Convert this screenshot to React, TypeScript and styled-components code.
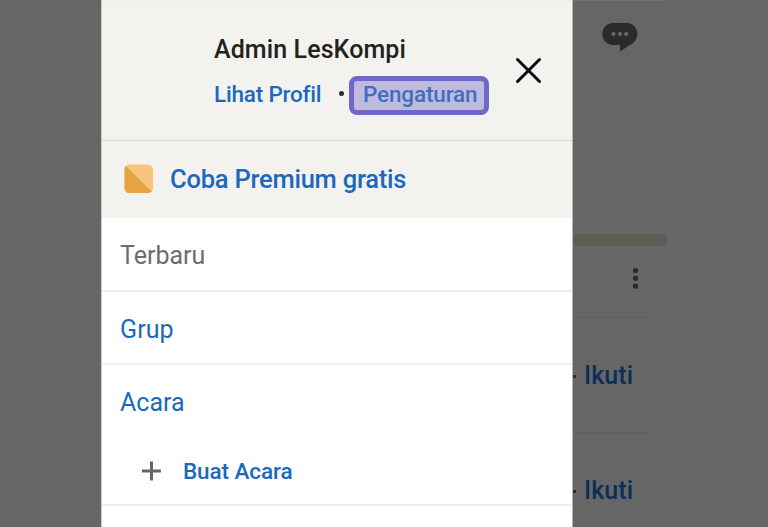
import React from 'react';
import styled, { createGlobalStyle } from 'styled-components';

const GlobalStyle = createGlobalStyle`
  * { box-sizing: border-box; }
  body { margin: 0; background: #666666; overflow: hidden; }
  button { appearance: none; background: none; border: 0; padding: 0; margin: 0; font: inherit; }
  svg { display: block; }
`;

const Screen = styled.div`
  display: grid;
  grid-template-columns: 101px 472px 1fr;
  width: 768px;
  height: 527px;
  overflow: hidden;
  background: #666666;
  font-family: Roboto, sans-serif;
`;

const Scrim = styled.div`
  border-bottom: 1px solid #606060;
`;

const Drawer = styled.aside`
  display: flex;
  flex-direction: column;
  background: #ffffff;
  box-shadow: inset 1px 0 0 #c9c9c7, inset -1px 0 0 #b8b8b6;
  padding: 0 1px;
`;

const Header = styled.header`
  display: flex;
  flex: none;
  height: 141px;
  padding-left: 112px;
  background: #f3f2ee;
  border-top: 1px solid #eeede9;
  border-bottom: 1px solid #d9dad6;
`;

const Identity = styled.div`
  flex: none;
  width: 300px;
  padding-top: 33px;
`;

const Label = styled.span<{ $size: number; $color?: string; $weight?: number; $track?: number }>`
  display: block;
  white-space: nowrap;
  font-size: ${(p) => p.$size}px;
  line-height: 32px;
  font-weight: ${(p) => p.$weight ?? 500};
  letter-spacing: ${(p) => p.$track ?? 0}px;
  color: ${(p) => p.$color ?? '#1b69bd'};
`;

const ProfileLinks = styled.div`
  display: flex;
  align-items: center;
  margin-top: 10px;
  height: 39px;
`;

const ProfileLink = styled.div`
  width: 125px;
  padding-bottom: 3px;
`;

const Separator = styled.i`
  width: 5px;
  height: 5px;
  margin: 0 5px 4px 0;
  border-radius: 50%;
  background: #2b2b29;
`;

const Highlight = styled.button`
  display: flex;
  align-items: center;
  width: 140px;
  height: 39px;
  padding: 0 0 3px 9px;
  border: 5px solid #7068c5;
  border-radius: 8px;
  background: #bfbae0;
`;

const CloseButton = styled.button`
  align-self: flex-start;
  margin: 56px 0 0;
`;

const PremiumRow = styled.div`
  display: flex;
  flex: none;
  align-items: center;
  height: 77px;
  padding: 0 0 1px 22px;
  gap: 16px;
  background: #f3f2ee;
`;

const Section = styled.section<{ $height: number }>`
  flex: none;
  height: ${(p) => p.$height}px;
  padding: 22px 0 0 18px;
  border-bottom: 2px solid #efefee;
`;

const SubItem = styled.div`
  display: flex;
  align-items: center;
  gap: 22px;
  margin-top: 36px;
  padding-left: 21px;
`;

const Page = styled.main`
  display: flex;
  flex-direction: column;
  border-bottom: 1px solid #606060;
`;

const Toolbar = styled.div`
  width: 94px;
  height: 234px;
  padding: 22px 0 0 29px;
  border-top: 1px solid #727272;
`;

const Band = styled.div`
  width: 94px;
  height: 12px;
  background: #5e5d56;
`;

const FeedHead = styled.div`
  width: 75px;
  height: 72px;
  padding: 20px 0 0 58px;
  border-bottom: 1px solid #606060;
`;

const FollowRow = styled.div`
  display: flex;
  align-items: center;
  width: 75px;
  height: 115px;
  padding-top: 2px;
  border-bottom: 1px solid #606060;
`;

const PlusEnd = styled.i`
  width: 3px;
  height: 3px;
  margin-right: 8px;
  background: #0c2f59;
`;

const CloseIcon = () => (
  <svg width="28" height="28" viewBox="0 0 28 28" fill="none" stroke="#0a0a0a" strokeWidth="3" strokeLinecap="round">
    <path d="M3.500 2.500 25.500 24.500M25.500 2.500 3.500 24.500" />
  </svg>
);

const PremiumIcon = () => (
  <svg width="30" height="30" viewBox="0 0 30 30">
    <rect x="0.5" y="0.5" width="28.5" height="28.5" rx="5" fill="#f7c67c" />
    <path d="M1.9 1.9 27.5 27.5Q26 29 24 29H5.5Q.5 29 .5 24V5.500Q.5 3.200 1.900 1.900Z" fill="#e7a340" />
  </svg>
);

const PlusIcon = () => (
  <svg width="20" height="20" viewBox="0 0 20 20" stroke="#666666" strokeWidth="3">
    <path d="M10.500 .5v19M.9 10h19" />
  </svg>
);

const ChatIcon = () => (
  <svg width="36" height="30" viewBox="0 0 36 30">
    <path
      d="M11.500 0H24.500C30.500 0 35.300 4.700 35.300 11C35.300 15 33.500 18.200 30.200 20.600L18 28.500V22H11.500C5 22 .3 17.500 .3 11S5 0 11.500 0Z"
      fill="#2a2a27"
    />
    <g fill="#6a6a69">
      <circle cx="11.500" cy="11" r="2.100" />
      <circle cx="17.900" cy="11" r="2.100" />
      <circle cx="24.200" cy="11" r="2.100" />
    </g>
  </svg>
);

const MoreIcon = () => (
  <svg width="8" height="24" viewBox="0 0 8 24" fill="#2a2a27">
    <circle cx="4.500" cy="4.500" r="2.600" />
    <circle cx="4.500" cy="12.300" r="2.600" />
    <circle cx="4.500" cy="20.200" r="2.600" />
  </svg>
);

const Follow = () => (
  <FollowRow>
    <PlusEnd />
    <Label $size={25} $color="#0c2f59" $track={0.1}>Ikuti</Label>
  </FollowRow>
);

export default function App() {
  return (
    <>
      <GlobalStyle />
      <Screen>
        <Scrim />
        <Drawer>
          <Header>
            <Identity>
              <Label $size={25} $color="#222220" $track={0.1}>Admin LesKompi</Label>
              <ProfileLinks>
                <ProfileLink>
                  <Label $size={22.5} $track={-0.2}>Lihat Profil</Label>
                </ProfileLink>
                <Separator />
                <Highlight>
                  <Label $size={22.5} $color="#416ebe" $track={-0.15}>Pengaturan</Label>
                </Highlight>
              </ProfileLinks>
            </Identity>
            <CloseButton aria-label="Tutup"><CloseIcon /></CloseButton>
          </Header>
          <PremiumRow>
            <PremiumIcon />
            <Label $size={25.5} $track={-0.23}>Coba Premium gratis</Label>
          </PremiumRow>
          <Section $height={74}>
            <Label $size={25} $weight={400} $color="#6d6c69">Terbaru</Label>
          </Section>
          <Section $height={73}>
            <Label $size={25} $weight={400} $track={0.1}>Grup</Label>
          </Section>
          <Section $height={141}>
            <Label $size={25} $weight={400}>Acara</Label>
            <SubItem>
              <PlusIcon />
              <Label $size={22.5} $track={-0.1}>Buat Acara</Label>
            </SubItem>
          </Section>
        </Drawer>
        <Page>
          <Toolbar><ChatIcon /></Toolbar>
          <Band />
          <FeedHead><MoreIcon /></FeedHead>
          <Follow />
          <Follow />
        </Page>
      </Screen>
    </>
  );
}
